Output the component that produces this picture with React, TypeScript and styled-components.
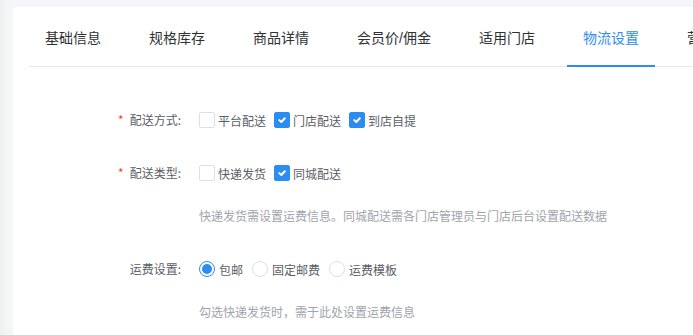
import React, { useState } from "react";
import styled, { createGlobalStyle } from "styled-components";

const Global = createGlobalStyle`
  html, body {
    margin: 0;
    padding: 0;
    overflow: hidden;
    background: linear-gradient(to right, #eceef1 0, #f3f4f6 5px, #f5f6f8 12px);
    font-family: "Noto Sans CJK SC", "Noto Sans", sans-serif;
    -webkit-font-smoothing: antialiased;
  }
`;

const Page = styled.div`
  padding: 7px 0 0 13px;
  height: 335px;
  box-sizing: border-box;
  overflow: hidden;
`;

const Card = styled.div`
  width: 1000px;
  height: 400px;
  background: #fff;
  border-radius: 4px;
  padding: 0 16px;
  box-sizing: border-box;
`;

const TabBar = styled.div`
  display: flex;
  gap: 16px;
  height: 60px;
  border-bottom: 1px solid #e4e7ed;
  box-sizing: border-box;
  white-space: nowrap;
`;

const Tab = styled.div<{ $active?: boolean }>`
  position: relative;
  display: flex;
  align-items: center;
  padding: 1px 16px 0;
  font-family: "Liberation Sans", "Noto Sans CJK SC", sans-serif;
  font-size: 14px;
  color: ${(p) => (p.$active ? "#2d8cf0" : "#303133")};
  cursor: pointer;
  &::after {
    content: "";
    display: ${(p) => (p.$active ? "block" : "none")};
    position: absolute;
    left: 0;
    right: 0;
    bottom: -1px;
    height: 2px;
    background: #2d8cf0;
  }
`;

const Form = styled.div`
  padding-top: 37px;
`;

const Item = styled.div<{ $mb: number }>`
  display: flex;
  align-items: flex-start;
  margin-bottom: ${(p) => p.$mb}px;
`;

const Label = styled.div<{ $required?: boolean }>`
  width: 170px;
  padding-right: 18px;
  box-sizing: border-box;
  text-align: right;
  font-size: 12px;
  line-height: 32px;
  color: #5a5e66;
  flex-shrink: 0;
  &::before {
    content: ${(p) => (p.$required ? '"*"' : '""')};
    color: #f5442a;
    margin-right: 6px;
  }
`;

const Control = styled.div`
  display: flex;
  flex-direction: column;
`;

const Options = styled.div`
  display: flex;
  align-items: center;
  height: 32px;
`;

const Option = styled.label<{ $gap: number }>`
  display: flex;
  align-items: center;
  margin-right: ${(p) => p.$gap}px;
  font-size: 12px;
  color: #5a5e66;
  cursor: pointer;
`;

const Box = styled.span<{ $checked?: boolean }>`
  width: 16px;
  height: 16px;
  box-sizing: border-box;
  border-radius: 2px;
  border: 1px solid ${(p) => (p.$checked ? "#2d8cf0" : "#dcdfe6")};
  background: ${(p) => (p.$checked ? "#2d8cf0" : "#fff")};
  display: flex;
  align-items: center;
  justify-content: center;
  margin-right: 3px;
`;

const Radio = styled.span<{ $checked?: boolean }>`
  width: 16px;
  height: 16px;
  box-sizing: border-box;
  border-radius: 50%;
  border: 1px solid ${(p) => (p.$checked ? "#2d8cf0" : "#dcdfe6")};
  background: #fff;
  display: flex;
  align-items: center;
  justify-content: center;
  margin-right: 4px;
  &::after {
    content: "";
    display: ${(p) => (p.$checked ? "block" : "none")};
    width: 10px;
    height: 10px;
    border-radius: 50%;
    background: #2d8cf0;
  }
`;

const Help = styled.div`
  margin-top: 17px;
  font-size: 12px;
  line-height: 20px;
  color: #a0a4ab;
`;

const Check = () => (
  <svg width="10" height="10" viewBox="0 0 10 10">
    <path d="M2.3 5.1 L4.3 7 L7.8 3.2" fill="none" stroke="#fff" strokeWidth="2" strokeLinecap="round" strokeLinejoin="round" />
  </svg>
);

const tabs = ["基础信息", "规格库存", "商品详情", "会员价/佣金", "适用门店", "物流设置", "营销设置", "其他设置"];

export default function App() {
  const [method, setMethod] = useState<Record<string, boolean>>({ 平台配送: false, 门店配送: true, 到店自提: true });
  const [type, setType] = useState<Record<string, boolean>>({ 快递发货: false, 同城配送: true });
  const [fee, setFee] = useState("包邮");

  return (
    <>
      <Global />
      <Page>
        <Card>
          <TabBar>
            {tabs.map((t) => (
              <Tab key={t} $active={t === "物流设置"}>
                {t}
              </Tab>
            ))}
          </TabBar>
          <Form>
            <Item $mb={21}>
              <Label $required>配送方式:</Label>
              <Control>
                <Options>
                  {Object.keys(method).map((k) => (
                    <Option key={k} $gap={8} onClick={() => setMethod({ ...method, [k]: !method[k] })}>
                      <Box $checked={method[k]}>{method[k] && <Check />}</Box>
                      {k}
                    </Option>
                  ))}
                </Options>
              </Control>
            </Item>
            <Item $mb={27}>
              <Label $required>配送类型:</Label>
              <Control>
                <Options>
                  {Object.keys(type).map((k) => (
                    <Option key={k} $gap={8} onClick={() => setType({ ...type, [k]: !type[k] })}>
                      <Box $checked={type[k]}>{type[k] && <Check />}</Box>
                      {k}
                    </Option>
                  ))}
                </Options>
                <Help>快递发货需设置运费信息。同城配送需各门店管理员与门店后台设置配送数据</Help>
              </Control>
            </Item>
            <Item $mb={0}>
              <Label>运费设置:</Label>
              <Control>
                <Options>
                  {["包邮", "固定邮费", "运费模板"].map((k) => (
                    <Option key={k} $gap={9} onClick={() => setFee(k)}>
                      <Radio $checked={fee === k} />
                      {k}
                    </Option>
                  ))}
                </Options>
                <Help>勾选快递发货时，需于此处设置运费信息</Help>
              </Control>
            </Item>
          </Form>
        </Card>
      </Page>
    </>
  );
}
